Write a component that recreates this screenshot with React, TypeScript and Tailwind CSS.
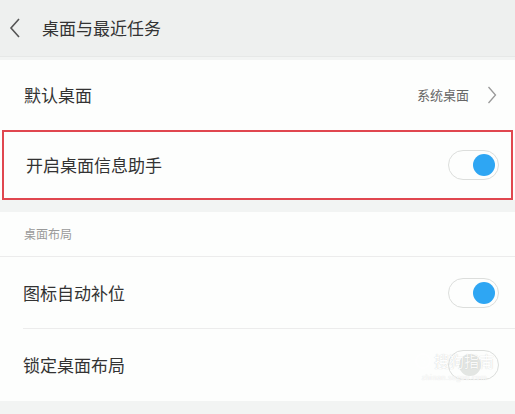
import React from "react";

function Toggle({ on }: { on: boolean }) {
  return (
    <div className="w-[51px] h-[30px] rounded-full border border-[#dcdedc] bg-[#fdfefd] flex items-center px-[3px]">
      {on ? (
        <div className="ml-auto w-[22px] h-[22px] rounded-full bg-[#2ea6f3]" />
      ) : (
        <div className="ml-[7px] w-[22px] h-[22px] rounded-full bg-[#e3e6e3]" />
      )}
    </div>
  );
}

export default function App() {
  return (
    <div
      className="relative w-[515px] h-[414px] overflow-hidden bg-[#f2f4f3] text-[#333]"
      style={{ fontFamily: '"Noto Sans CJK SC", "Noto Sans", sans-serif' }}
    >
      {/* header */}
      <div className="h-[57px] bg-[#eef0ef] flex items-center border-b border-[#e6e8e7]">
        <svg width="14" height="22" viewBox="0 0 14 22" className="ml-[8px]">
          <path d="M11 2 L3 11 L11 20" fill="none" stroke="#555" strokeWidth="1.6" />
        </svg>
        <span className="ml-[20px] text-[17px] text-[#333]">桌面与最近任务</span>
      </div>

      <div className="h-[3px]" />

      {/* group 1 */}
      <div className="bg-[#fdfefd]">
        <div className="h-[70px] flex items-center pl-[24px] pr-[18px]">
          <span className="text-[17px]">默认桌面</span>
          <span className="ml-auto text-[13px] text-[#666]">系统桌面</span>
          <svg width="10" height="20" viewBox="0 0 10 20" className="ml-[18px]">
            <path d="M1.5 2 L8.5 10 L1.5 18" fill="none" stroke="#999" strokeWidth="1.3" />
          </svg>
        </div>
        <div className="h-[70px] mx-[2px] border-2 border-[#e0474f] flex items-center pl-[22px] pr-[12px]">
          <span className="text-[17px]">开启桌面信息助手</span>
          <div className="ml-auto">
            <Toggle on />
          </div>
        </div>
      </div>

      <div className="h-[12px]" />

      {/* group 2 */}
      <div className="bg-[#fdfefd]">
        <div className="h-[45px] flex items-center pl-[24px] border-b border-[#ececec]">
          <span className="text-[12px] text-[#9a9a9a]">桌面布局</span>
        </div>
        <div className="ml-[23px]">
          <div className="h-[72px] flex items-center pr-[16px] border-b border-[#ececec]">
            <span className="text-[17px]">图标自动补位</span>
            <div className="ml-auto">
              <Toggle on />
            </div>
          </div>
          <div className="h-[72px] flex items-center pr-[16px]">
            <span className="text-[17px]">锁定桌面布局</span>
            <div className="ml-auto">
              <Toggle on={false} />
            </div>
          </div>
        </div>
      </div>

      {/* watermark */}
      <div className="absolute left-[415px] top-[352px] flex flex-col items-center gap-[3px] text-white opacity-80 pointer-events-none">
        <div className="flex items-center gap-[3px] h-[18px]">
          <span className="w-[16px] h-[16px] rounded-full border-2 border-white text-[10px] leading-[12px] text-center font-bold">S</span>
          <span className="text-[15px] leading-[18px] [text-shadow:0_0_1px_#bbb]">搜狗指南</span>
        </div>
        <span className="text-[7px] leading-[8px] tracking-wider [text-shadow:0_0_1px_#ccc]">zhinan.sogou.com</span>
      </div>
    </div>
  );
}
